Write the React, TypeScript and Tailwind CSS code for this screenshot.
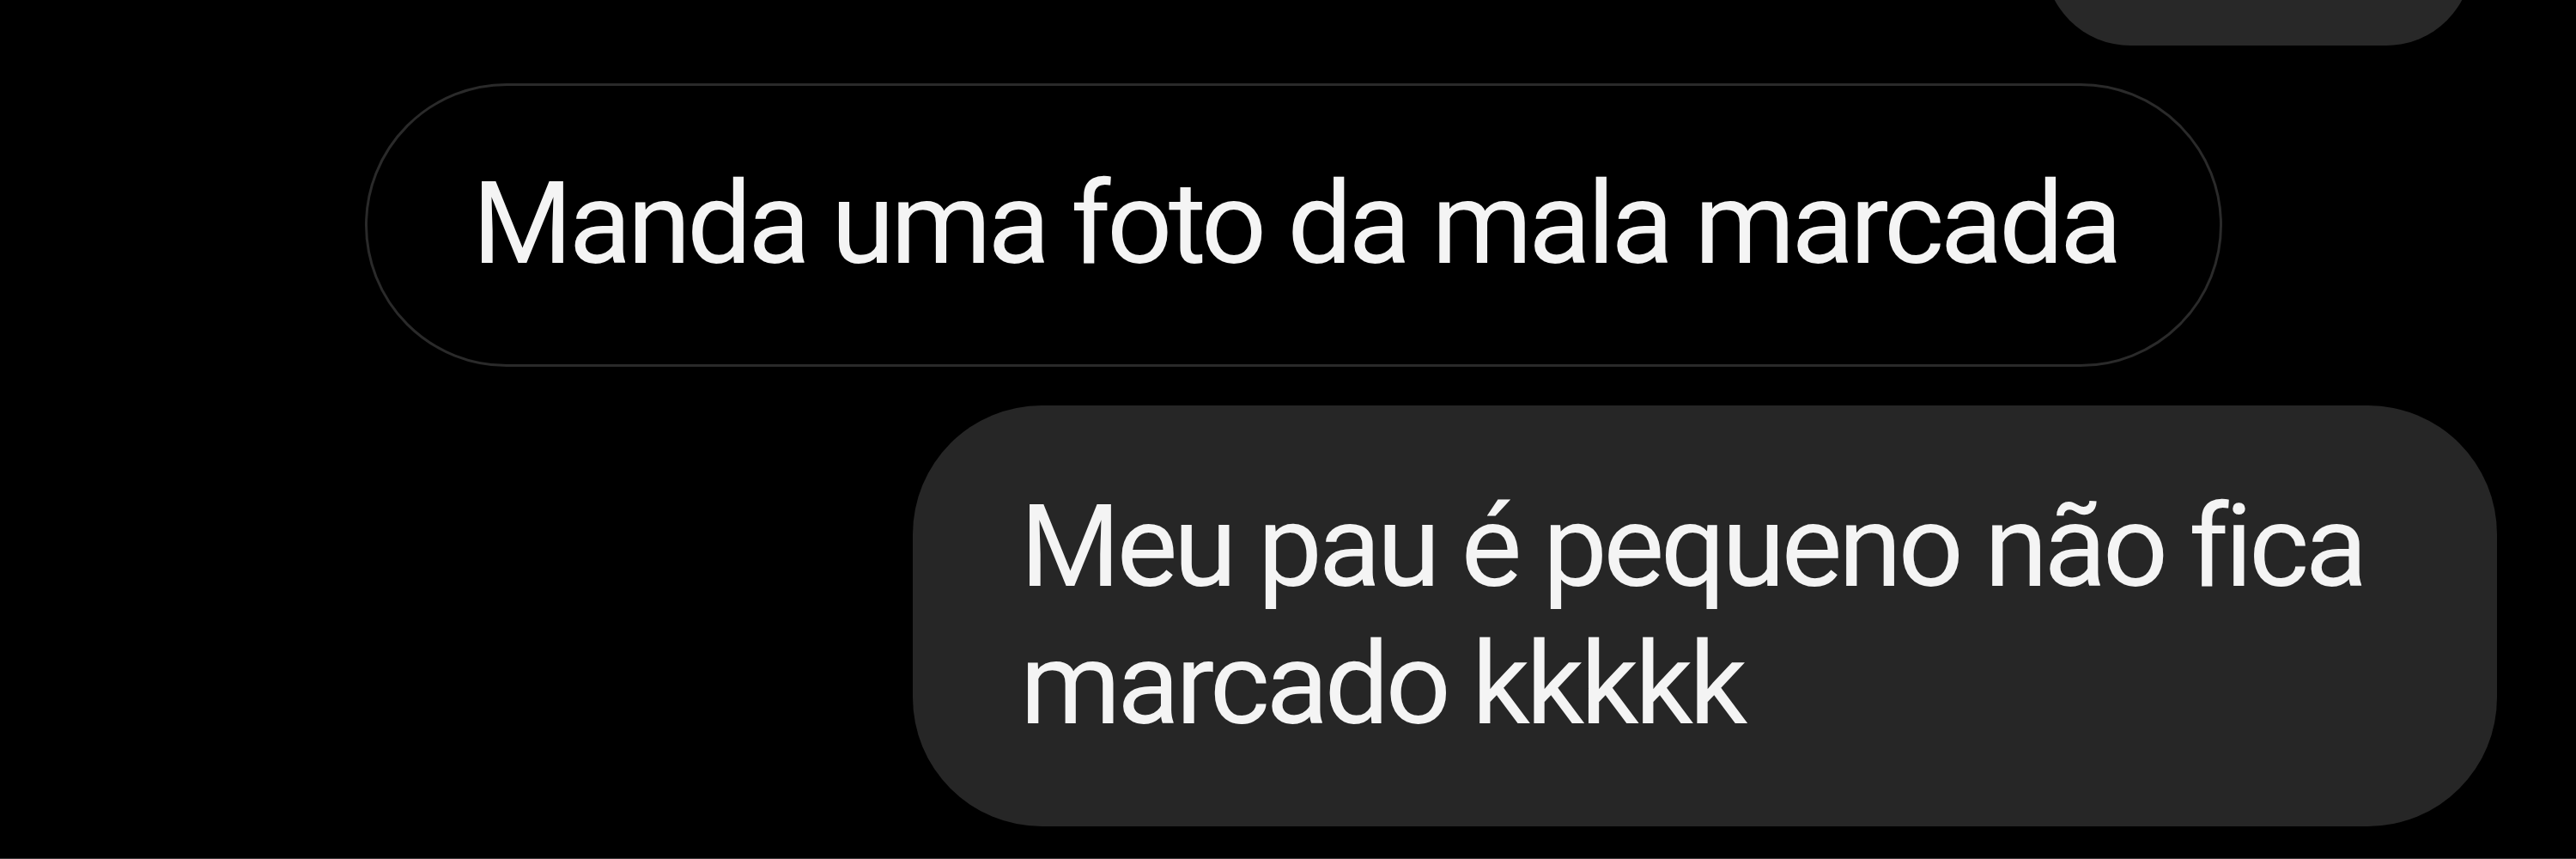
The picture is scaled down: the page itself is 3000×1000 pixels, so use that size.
const font = { fontFamily: 'Roboto, "Noto Sans", sans-serif' };

export default function App() {
  return (
    <div className="w-[3000px] h-[1000px] overflow-hidden bg-black flex flex-col border-b border-[#3a3a3a]" style={font}>
      {/* previous sent bubble, cut off at the top */}
      <div className="self-end mr-[121px] -mt-[147px] w-[498px] h-[200px] shrink-0 rounded-[100px] bg-[#282828]" />

      {/* received */}
      <div className="self-start ml-[425px] mt-[44px] rounded-full border-[3px] border-[#2a2a2a] pl-[122px] pr-[118px] pt-[81px] pb-[83px]">
        <p className="text-[134px] leading-[160px] tracking-[-4.6px] text-[#f4f4f4] whitespace-nowrap">Manda uma foto da mala marcada</p>
      </div>

      {/* sent */}
      <div className="self-end mr-[92px] mt-[45px] w-[1845px] rounded-[150px] bg-[#262626] pl-[125px] pr-[40px] pt-[85px] pb-[85px]">
        <p className="text-[134px] leading-[160px] tracking-[-4.6px] text-[#f4f4f4] whitespace-nowrap">
          Meu pau é pequeno não fica
          <br />
          marcado kkkkk
        </p>
      </div>
    </div>
  );
}
